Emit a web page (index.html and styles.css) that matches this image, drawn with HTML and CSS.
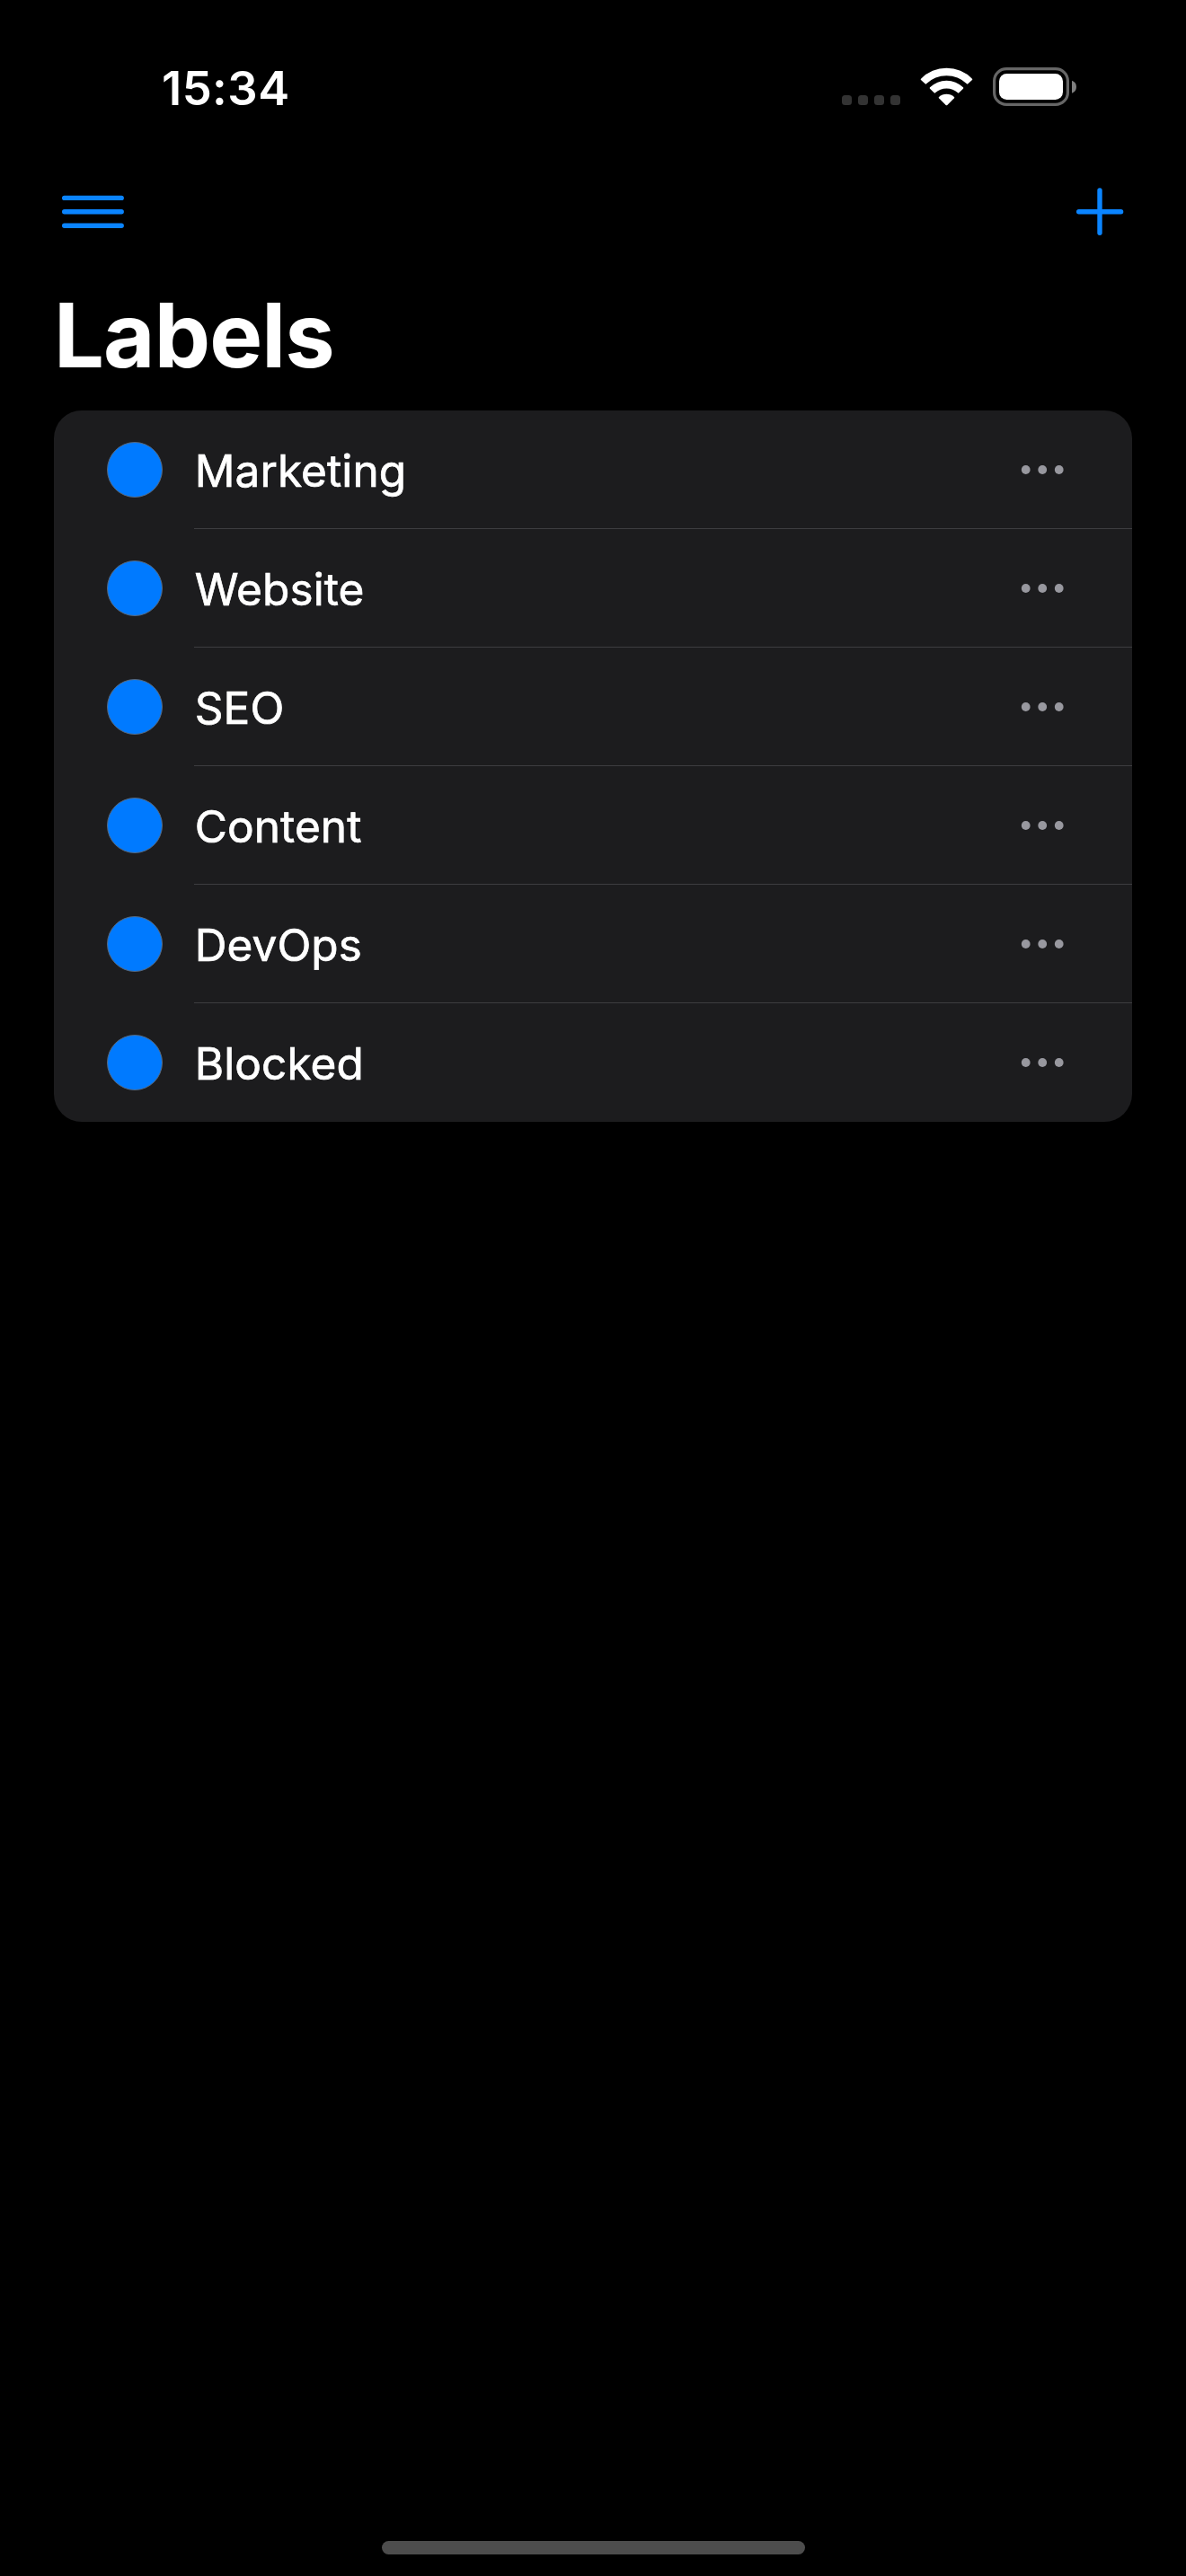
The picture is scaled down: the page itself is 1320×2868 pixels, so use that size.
FILE: index.html
```html
<!DOCTYPE html>
<html lang="en">
<head>
<meta charset="utf-8">
<title>Labels</title>
<link rel="stylesheet" href="styles.css">
</head>
<body>
<div class="screen">
  <header class="status-bar">
    <time class="clock">15:34</time>
    <svg class="status-icons" viewBox="0 0 300 100" aria-hidden="true">
      <g fill="#333">
        <rect x="17" y="56" width="11" height="11" rx="3.5"/>
        <rect x="35" y="56" width="11" height="11" rx="3.5"/>
        <rect x="53" y="56" width="11" height="11" rx="3.5"/>
        <rect x="71" y="56" width="11" height="11" rx="3.5"/>
      </g>
      <g fill="#fff" transform="scale(.33333)">
        <path d="M315 113A120 120 0 0 1 486 113Q488 115 486 117L472 130Q470 132 468 130A97 97 0 0 0 333 130Q331 132 329 130L315 117Q313 115 315 113Z"/>
        <path d="M345 142A79 79 0 0 1 456 142Q458 144 456 146L442 160Q440 162 438 160A55 55 0 0 0 363 160Q361 162 359 160L345 146Q343 144 345 142Z"/>
        <path d="M375 174A38 38 0 0 1 426 174Q428 176 426 178L403 201Q400.500 203 398 201L375 178Q373 176 375 174Z"/>
      </g>
      <rect x="186.600" y="26.600" width="81.800" height="39.800" rx="13.500" fill="none" stroke="#666" stroke-width="3.200"/>
      <rect x="192" y="32" width="71" height="29" rx="8.500"/>
      <path d="M273 39.700C276.500 41 278 43.500 278 46.700S276.500 52.500 273 53.700Z" fill="#7f7f7f"/>
    </svg>
  </header>
  <nav class="toolbar">
    <button class="tool" aria-label="Menu">
      <svg width="70" height="38" viewBox="0 0 70 38"><path d="M3.700 3.400H67.200M3.700 18.800H67.200M3.700 34.300H67.200"/></svg>
    </button>
    <button class="tool" aria-label="Add label">
      <svg width="54" height="54" viewBox="0 0 54 54"><path d="M27 3V50.300M3.700 26.700H50.600"/></svg>
    </button>
  </nav>
  <h1 class="title">Labels</h1>
  <ul class="list">
    <li class="row"><span class="swatch"></span><div class="cell"><span class="name">Marketing</span><svg class="more" viewBox="0 0 48 12"><circle cx="5.700" cy="6" r="4.900"/><circle cx="24.200" cy="6" r="4.900"/><circle cx="42.700" cy="6" r="4.900"/></svg></div></li>
    <li class="row"><span class="swatch"></span><div class="cell"><span class="name">Website</span><svg class="more" viewBox="0 0 48 12"><circle cx="5.700" cy="6" r="4.900"/><circle cx="24.200" cy="6" r="4.900"/><circle cx="42.700" cy="6" r="4.900"/></svg></div></li>
    <li class="row"><span class="swatch"></span><div class="cell"><span class="name">SEO</span><svg class="more" viewBox="0 0 48 12"><circle cx="5.700" cy="6" r="4.900"/><circle cx="24.200" cy="6" r="4.900"/><circle cx="42.700" cy="6" r="4.900"/></svg></div></li>
    <li class="row"><span class="swatch"></span><div class="cell"><span class="name">Content</span><svg class="more" viewBox="0 0 48 12"><circle cx="5.700" cy="6" r="4.900"/><circle cx="24.200" cy="6" r="4.900"/><circle cx="42.700" cy="6" r="4.900"/></svg></div></li>
    <li class="row"><span class="swatch"></span><div class="cell"><span class="name">DevOps</span><svg class="more" viewBox="0 0 48 12"><circle cx="5.700" cy="6" r="4.900"/><circle cx="24.200" cy="6" r="4.900"/><circle cx="42.700" cy="6" r="4.900"/></svg></div></li>
    <li class="row"><span class="swatch"></span><div class="cell"><span class="name">Blocked</span><svg class="more" viewBox="0 0 48 12"><circle cx="5.700" cy="6" r="4.900"/><circle cx="24.200" cy="6" r="4.900"/><circle cx="42.700" cy="6" r="4.900"/></svg></div></li>
  </ul>
  <div class="home-indicator"></div>
</div>
</body>
</html>
```
FILE: styles.css
```css
* {
  box-sizing: border-box;
}

body {
  margin: 0;
  background: #000;
  color: #fff;
  font-family: Inter, "Liberation Sans", sans-serif;
}

.screen {
  display: flex;
  flex-direction: column;
  width: 1320px;
  height: 2868px;
  padding-bottom: 24px;
}

.status-bar {
  display: flex;
  justify-content: space-between;
  height: 150px;
  padding: 50px 100px 0 180px;
}

.clock {
  padding-top: 18px;
  font-size: 52.5px;
  font-weight: 600;
  line-height: 60px;
  letter-spacing: 0.45px;
}

.status-icons {
  width: 300px;
  height: 100px;
  fill: #fff;
}

.toolbar {
  display: flex;
  align-items: center;
  justify-content: space-between;
  height: 172px;
  padding: 0 69px 0 68px;
}

.tool {
  display: flex;
  padding: 0;
  border: 0;
  background: none;
}

.tool svg {
  fill: none;
  stroke: #0a84ff;
  stroke-width: 5.4;
  stroke-linecap: round;
}

.title {
  height: 135px;
  margin: 0;
  padding: 0 60px;
  font-size: 99px;
  font-weight: 700;
  line-height: 102px;
  letter-spacing: -0.9px;
}

.list {
  margin: 0 60px;
  padding: 0;
  overflow: hidden;
  border-radius: 31px;
  background: #1c1c1e;
  list-style: none;
}

.row {
  display: flex;
  align-items: center;
  gap: 35px;
  height: 132px;
  padding-left: 59px;
}

.swatch {
  width: 62px;
  height: 62px;
  border: 1px solid #58687c;
  border-radius: 50%;
  background: #007aff;
}

.cell {
  display: flex;
  flex: 1;
  align-items: center;
  justify-content: space-between;
  height: 132px;
  padding-right: 76px;
  box-shadow: inset 0 -1px #3d3d40;
}

.row:last-child .cell {
  box-shadow: none;
}

.name {
  padding: 2px 0 0 0.7px;
  font-size: 49.5px;
  line-height: 60px;
  letter-spacing: 0.1px;
  -webkit-text-stroke: 0.7px #fff;
}

.more {
  width: 48px;
  height: 12px;
  fill: #98989f;
}

.home-indicator {
  width: 471px;
  height: 15px;
  margin: auto auto 0 425px;
  border-radius: 8px;
  background: #4d4d4d;
}
```
